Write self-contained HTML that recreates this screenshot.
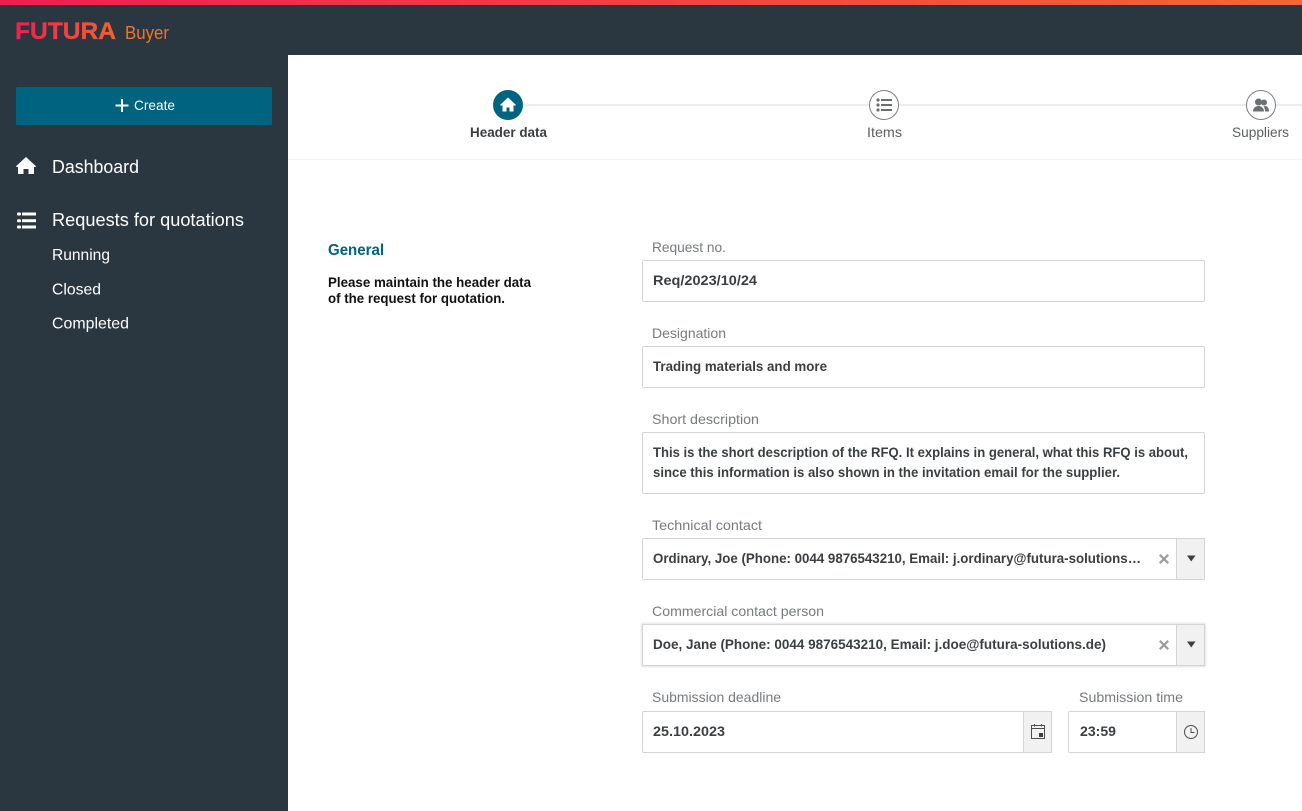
<!DOCTYPE html>
<html lang="en">
<head>
<meta charset="utf-8">
<title>FUTURA Buyer</title>
<style>
html,body{margin:0;padding:0;width:1302px;height:811px;overflow:hidden;background:#fff}
svg{display:block}
text{font-family:"Liberation Sans",sans-serif;white-space:pre}
.lab{font-size:14px;fill:#777b7f}
.val{font-size:14px;font-weight:bold;fill:#3b3f42}
.nav{font-size:18px;fill:#fff}
.sub{font-size:16px;fill:#fff}
.box{fill:#fff;stroke:#d3d4d5;stroke-width:1}
.add{fill:#f1f1f1;stroke:#d3d4d5;stroke-width:1}
</style>
</head>
<body>
<svg width="1302" height="811" viewBox="0 0 1302 811" xmlns="http://www.w3.org/2000/svg">
<defs>
<linearGradient id="top" x1="0" x2="1" y1="0" y2="0"><stop offset="0" stop-color="#f01e50"/><stop offset="1" stop-color="#f36636"/></linearGradient>
<linearGradient id="logo" gradientUnits="userSpaceOnUse" x1="15" x2="135" y1="0" y2="0"><stop offset="0" stop-color="#f01e50"/><stop offset="1" stop-color="#f3702c"/></linearGradient>
</defs>
<rect width="1302" height="811" fill="#fff"/>
<rect width="288" height="811" fill="#2a3640"/>
<rect width="1302" height="55" fill="#2a3640"/>
<rect width="1302" height="5" fill="url(#top)"/>
<text x="15" y="39" font-size="24" font-weight="bold" fill="url(#logo)" stroke="url(#logo)" stroke-width=".35" textLength="101" lengthAdjust="spacingAndGlyphs">FUTURA</text>
<text x="125" y="39" font-size="18" fill="#f3722c" textLength="44" lengthAdjust="spacingAndGlyphs">Buyer</text>

<rect x="16" y="87" width="256" height="38" rx="1.5" fill="#00637f"/>
<path d="M122 99v13M115.500 105.500h13" stroke="#fff" stroke-width="2" fill="none"/>
<text x="134" y="110" font-size="14" fill="#fff" textLength="41" lengthAdjust="spacingAndGlyphs">Create</text>

<path d="M26 157 16 166.200l.8.800H18v7h5.500v-5h5v5H34v-7h1.200l.8-.800z" fill="#fff"/>
<text class="nav" x="52" y="173" textLength="87" lengthAdjust="spacingAndGlyphs">Dashboard</text>
<g fill="#fff"><rect x="17" y="212.500" width="4" height="3" rx="1"/><rect x="17" y="219.200" width="4" height="3" rx="1"/><rect x="17" y="225.500" width="4" height="3" rx="1"/><rect x="22" y="212.500" width="14" height="3"/><rect x="22" y="219.200" width="14" height="3"/><rect x="22" y="225.500" width="14" height="3"/></g>
<text class="nav" x="52" y="226" textLength="192" lengthAdjust="spacingAndGlyphs">Requests for quotations</text>
<text class="sub" x="52" y="260" textLength="58" lengthAdjust="spacingAndGlyphs">Running</text>
<text class="sub" x="52" y="294.500" textLength="49" lengthAdjust="spacingAndGlyphs">Closed</text>
<text class="sub" x="52" y="328.500" textLength="77" lengthAdjust="spacingAndGlyphs">Completed</text>

<rect x="288" y="159" width="1014" height="1" fill="#f3f3f3"/>
<rect x="523" y="104" width="779" height="2" fill="#ececec"/>
<circle cx="508" cy="105" r="15" fill="#00637f"/>
<path d="M508 97.500 500 105l.5.500h2v6h4v-4h3v4h4v-6h2l.5-.500z" fill="#fff"/>
<text x="470" y="137" font-size="14" font-weight="bold" fill="#3b3f42" textLength="77" lengthAdjust="spacingAndGlyphs">Header data</text>
<circle cx="884" cy="105" r="14.500" fill="#fff" stroke="#7b7e80"/>
<g fill="#6b6f72"><circle cx="878" cy="100" r="1.600"/><circle cx="878" cy="105" r="1.600"/><circle cx="878" cy="110" r="1.600"/><rect x="881" y="99" width="11" height="2"/><rect x="881" y="104" width="11" height="2"/><rect x="881" y="109" width="11" height="2"/></g>
<text x="867" y="137" font-size="14" fill="#5c5f62" textLength="35" lengthAdjust="spacingAndGlyphs">Items</text>
<circle cx="1261" cy="105" r="14.500" fill="#fff" stroke="#7b7e80"/>
<g fill="#6b6f72"><circle cx="1258.500" cy="102" r="3.500"/><circle cx="1264" cy="102.500" r="3"/><path d="M1253 111.500c0-3.500 2.500-5.500 5.500-5.500s5.500 2 5.500 5.500z"/><path d="M1265 106c2.500 0 4 2 4 5.500h-4c0-2-.500-4-1.500-5z"/></g>
<text x="1232" y="137" font-size="14" fill="#5c5f62" textLength="57" lengthAdjust="spacingAndGlyphs">Suppliers</text>

<text x="328" y="255" font-size="15.500" font-weight="bold" fill="#00637f" textLength="56" lengthAdjust="spacingAndGlyphs">General</text>
<text x="328" y="287" font-size="14" font-weight="bold" fill="#111" textLength="203" lengthAdjust="spacingAndGlyphs">Please maintain the header data</text>
<text x="328" y="303" font-size="14" font-weight="bold" fill="#111" textLength="177" lengthAdjust="spacingAndGlyphs">of the request for quotation.</text>

<text class="lab" x="652" y="252" textLength="74" lengthAdjust="spacingAndGlyphs">Request no.</text>
<rect class="box" x="642.500" y="260.500" width="562" height="41" rx="1.500"/>
<text class="val" x="653" y="285" textLength="104" lengthAdjust="spacingAndGlyphs">Req/2023/10/24</text>

<text class="lab" x="652" y="338" textLength="74" lengthAdjust="spacingAndGlyphs">Designation</text>
<rect class="box" x="642.500" y="346.500" width="562" height="41" rx="1.500"/>
<text class="val" x="653" y="371" textLength="174" lengthAdjust="spacingAndGlyphs">Trading materials and more</text>

<text class="lab" x="652" y="424" textLength="107" lengthAdjust="spacingAndGlyphs">Short description</text>
<rect class="box" x="642.500" y="432.500" width="562" height="61" rx="1.500"/>
<text class="val" x="653" y="457" textLength="535" lengthAdjust="spacingAndGlyphs">This is the short description of the RFQ. It explains in general, what this RFQ is about,</text>
<text class="val" x="653" y="477" textLength="467" lengthAdjust="spacingAndGlyphs">since this information is also shown in the invitation email for the supplier.</text>

<text class="lab" x="652" y="530" textLength="110" lengthAdjust="spacingAndGlyphs">Technical contact</text>
<rect class="box" x="642.500" y="538.500" width="562" height="41" rx="1.500"/>
<rect class="add" x="1176.500" y="538.500" width="28" height="41"/>
<text class="val" x="653" y="563" textLength="488" lengthAdjust="spacingAndGlyphs">Ordinary, Joe (Phone: 0044 9876543210, Email: j.ordinary@futura-solutions…</text>
<path d="M1159.800 554.800l8.400 8.400M1168.200 554.800l-8.400 8.400" stroke="#9a9c9e" stroke-width="2.200" fill="none"/>
<path d="M1187 555.500h8.500l-4.250 6z" fill="#3b3f42"/>

<text class="lab" x="652" y="616" textLength="172" lengthAdjust="spacingAndGlyphs">Commercial contact person</text>
<rect x="640.500" y="622.500" width="566" height="45" rx="2.500" fill="#ececec"/>
<rect class="box" x="642.500" y="624.500" width="562" height="41" rx="1.500"/>
<rect class="add" x="1176.500" y="624.500" width="28" height="41"/>
<text class="val" x="653" y="649" textLength="453" lengthAdjust="spacingAndGlyphs">Doe, Jane (Phone: 0044 9876543210, Email: j.doe@futura-solutions.de)</text>
<path d="M1159.800 640.800l8.400 8.400M1168.200 640.800l-8.400 8.400" stroke="#9a9c9e" stroke-width="2.200" fill="none"/>
<path d="M1187 641.500h8.500l-4.250 6z" fill="#3b3f42"/>

<text class="lab" x="652" y="702" textLength="129" lengthAdjust="spacingAndGlyphs">Submission deadline</text>
<rect class="box" x="642.500" y="711.500" width="409" height="41" rx="1.500"/>
<rect class="add" x="1023.500" y="711.500" width="28" height="41"/>
<text class="val" x="653" y="736" textLength="72" lengthAdjust="spacingAndGlyphs">25.10.2023</text>
<path d="M1031.500 725.500h13v13h-13zM1031.500 728.500h13" stroke="#4a4e51" fill="none"/>
<path d="M1034.500 724v2.500M1041.500 724v2.500" stroke="#4a4e51" fill="none"/>
<rect x="1039" y="733" width="4" height="4" fill="#3b3f42"/>

<text class="lab" x="1079" y="702" textLength="104" lengthAdjust="spacingAndGlyphs">Submission time</text>
<rect class="box" x="1068.500" y="711.500" width="136" height="41" rx="1.500"/>
<rect class="add" x="1176.500" y="711.500" width="28" height="41"/>
<text class="val" x="1080" y="736" textLength="36" lengthAdjust="spacingAndGlyphs">23:59</text>
<circle cx="1191" cy="732" r="6.500" fill="none" stroke="#4a4e51"/>
<path d="M1191 728v4.500h3.500" stroke="#4a4e51" fill="none"/>
</svg>
</body>
</html>
